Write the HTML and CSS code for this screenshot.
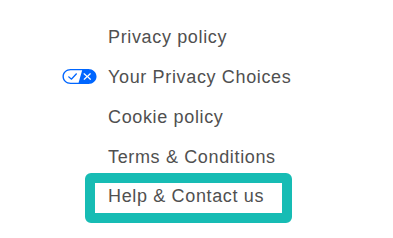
FILE: index.html
```html
<!DOCTYPE html>
<html>
<head>
<meta charset="utf-8">
<link rel="stylesheet" href="styles.css">
</head>
<body>
<ul class="links">
  <li class="item"><a class="link" href="#">Privacy policy</a></li>
  <li class="item item-choices">
    <svg class="choices-icon" viewBox="0 0 30 14" preserveAspectRatio="none" aria-hidden="true">
      <path d="M7.4 12.8h6.8l3.1-11.6H7.4C4.2 1.2 1.6 3.8 1.6 7s2.6 5.8 5.8 5.8z" fill="#fff"/>
      <path d="M22.6 0H7.4c-3.900 0-7 3.1-7 7s3.1 7 7 7h15.2c3.9 0 7-3.1 7-7s-3.2-7-7-7zm-21 7c0-3.2 2.6-5.8 5.8-5.8h9.9l-3.1 11.6H7.4c-3.2 0-5.8-2.6-5.8-5.8z" fill="#0066ff"/>
      <path d="M24.6 4c.2.2.2.6 0 .8L22.5 7l2.2 2.2c.2.2.2.6 0 .8-.2.2-.6.2-.8 0l-2.2-2.2-2.2 2.2c-.2.2-.6.2-.8 0-.2-.2-.2-.6 0-.8L20.8 7l-2.2-2.2c-.2-.2-.2-.6 0-.8.2-.2.6-.2.8 0l2.2 2.2L23.8 4c.2-.2.6-.2.8 0z" fill="#fff"/>
      <path d="M12.7 4.1c.2.2.3.6.1.8L8.6 9.8c-.1.1-.2.2-.3.2-.2.1-.5.1-.7-.1L5.4 7.7c-.2-.2-.2-.6 0-.8.2-.2.6-.2.8 0L8 8.6l3.8-4.5c.2-.2.6-.2.9 0z" fill="#0066ff"/>
    </svg>
    <a class="link" href="#">Your Privacy Choices</a>
  </li>
  <li class="item"><a class="link" href="#">Cookie policy</a></li>
  <li class="item"><a class="link" href="#">Terms &amp; Conditions</a></li>
  <li class="item-help"><a class="link" href="#">Help &amp; Contact us</a></li>
</ul>
</body>
</html>
```
FILE: styles.css
```css
html, body {
  margin: 0;
  padding: 0;
  background: #ffffff;
}

body {
  font-family: "Liberation Sans", Arial, sans-serif;
  font-size: 18px;
  color: #505050;
}

.links {
  list-style: none;
  margin: 0;
  padding: 17px 0 0 0;
}

.link {
  color: #505050;
  text-decoration: none;
  letter-spacing: 0.65px;
  white-space: nowrap;
}

.item {
  height: 40px;
  line-height: 40px;
  padding-left: 108px;
}

.item-choices {
  display: flex;
  align-items: center;
  gap: 11px;
  padding-left: 62px;
}

.choices-icon {
  width: 35px;
  height: 15px;
  flex: none;
  margin-top: -2px;
}

.item-help {
  box-sizing: border-box;
  width: 207px;
  height: 50px;
  margin: -4px 0 0 85px;
  border: 10px solid #17bcb4;
  border-radius: 6px;
  padding: 1px 0 5px 13px;
  line-height: 24px;
}
```
